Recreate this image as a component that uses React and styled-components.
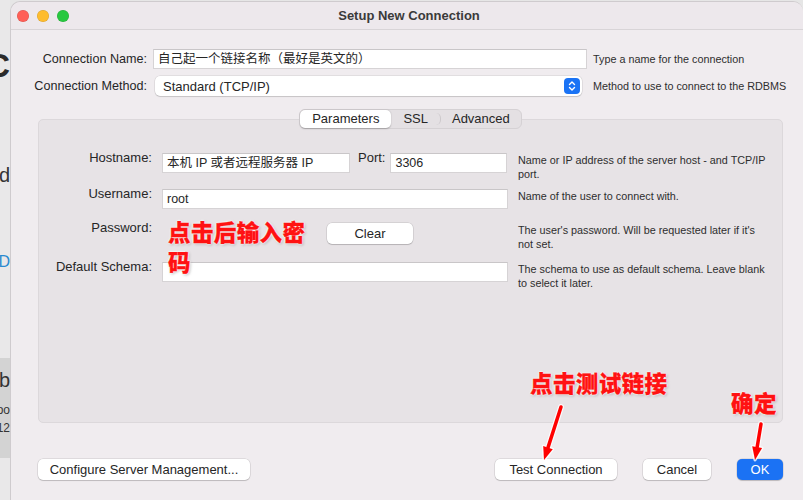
import React from "react";
import styled, { createGlobalStyle } from "styled-components";

const GlobalStyle = createGlobalStyle`
    html, body {
        margin: 0;
        padding: 0;
        background: #e6e6e6;
        font-family: "Liberation Sans", "Noto Sans CJK SC", sans-serif;
        color: #262626;
    }
`;

const Page = styled.div`
    display: flex;
    width: 803px;
    height: 500px;
    overflow: hidden;
`;

// --- fundo (app borrado atrás da janela) ---

const Backdrop = styled.div`
    width: 10px;
    flex-shrink: 0;
    display: flex;
    flex-direction: column;
    overflow: hidden;
    background: #e9e8e9;
`;

const BackBlock = styled.div`
    height: ${p => p.$h}px;
    background: ${p => p.$bg || "transparent"};
    display: flex;
    flex-direction: column;
    align-items: flex-end;
    justify-content: ${p => p.$justify || "center"};
    color: ${p => p.$color || "#333"};
    font-size: ${p => p.$size || 20}px;
    font-weight: ${p => p.$weight || 400};
    line-height: 1;
    white-space: nowrap;
`;

// --- janela ---

const Window = styled.div`
    position: relative;
    width: 793px;
    height: 499px;
    margin-top: 1px;
    background: #f0ecef;
    border: 1px solid #cfcbce;
    border-bottom: none;
    border-right: none;
    border-radius: 10px 10px 0 0;
    box-sizing: border-box;
    display: flex;
    flex-direction: column;
`;

const TitleBar = styled.div`
    height: 27px;
    flex-shrink: 0;
    display: flex;
    align-items: center;
    padding-left: 6px;
    border-bottom: 1px solid #d8d4d7;
    background: #ede8ec;
    border-radius: 10px 10px 0 0;
`;

const Light = styled.span`
    width: 12px;
    height: 12px;
    border-radius: 50%;
    margin-right: 8px;
    background: ${p => p.$color};
    box-shadow: inset 0 0 0 0.5px rgba(0,0,0,0.15);
`;

const Title = styled.div`
    flex: 1;
    text-align: center;
    font-weight: bold;
    font-size: 13px;
    color: #3a3a3a;
    margin-left: -62px;
`;

const TopForm = styled.div`
    display: grid;
    grid-template-columns: 136px 434px 1fr;
    column-gap: 6px;
    row-gap: 7px;
    padding-top: 19px;
    align-items: center;
`;

const TopLabel = styled.label`
    text-align: right;
    font-size: 12.6px;
`;

const TextInput = styled.div`
    height: 20px;
    box-sizing: border-box;
    background: #fff;
    border: 1px solid #d6d3d5;
    border-top-color: #c9c6c8;
    font-size: 12.5px;
    line-height: 18px;
    padding: 0 4px;
    white-space: nowrap;
    overflow: hidden;
    width: ${p => (p.$w ? `${p.$w}px` : "auto")};
`;

const Select = styled.div`
    margin-left: 2px;
    width: 427px;
    height: 20px;
    box-sizing: border-box;
    background: #fff;
    border-radius: 5px;
    box-shadow: 0 0 0 0.5px rgba(0,0,0,0.12), 0 1px 1px rgba(0,0,0,0.12);
    display: flex;
    align-items: center;
    justify-content: space-between;
    padding: 0 2px 0 8px;
    font-size: 13px;
`;

const Stepper = styled.span`
    width: 16px;
    height: 16px;
    border-radius: 4px;
    background: #1a73f5;
    display: flex;
    align-items: center;
    justify-content: center;
`;

const Hint = styled.div`
    font-size: 10.8px;
    line-height: 14px;
    color: #2e2e2e;
`;

// --- painel com abas ---

const TabArea = styled.div`
    margin: 13px 20px 0 27px;
    display: flex;
    flex-direction: column;
    align-items: center;
`;

const Segmented = styled.div`
    position: relative;
    z-index: 1;
    display: flex;
    align-items: center;
    height: 20px;
    box-sizing: border-box;
    border-radius: 6px;
    background: #e4e0e3;
    border: 1px solid #d5d1d4;
    font-size: 13px;
`;

const Tab = styled.div`
    padding: 0 ${p => p.$pad}px;
    border-radius: 5px;
    background: ${p => (p.$active ? "#fff" : "transparent")};
    box-shadow: ${p => (p.$active ? "0 0.5px 1.5px rgba(0,0,0,0.25)" : "none")};
    border-right: ${p => (p.$sep ? "1px solid #cdc9cc" : "none")};
    height: ${p => (p.$sep ? "12px" : "18px")};
    line-height: ${p => (p.$sep ? "12px" : "18px")};
`;

const Panel = styled.div`
    align-self: stretch;
    margin-top: -10px;
    height: 304px;
    box-sizing: border-box;
    background: #e7e3e6;
    border: 1px solid #dcd8db;
    border-radius: 5px;
    padding-top: 33px;
`;

const ParamGrid = styled.div`
    display: grid;
    grid-template-columns: 113px 346px 1fr;
    grid-template-rows: 36px 34px 39px auto;
    column-gap: 10px;
`;

const ParamLabel = styled.label`
    text-align: right;
    font-size: 13px;
    line-height: 14px;
    margin-top: -2px;
`;

const Controls = styled.div`
    display: flex;
    align-items: flex-start;
    padding-left: ${p => p.$pl || 0}px;
`;

const InlineLabel = styled.span`
    font-size: 13px;
    line-height: 14px;
    margin: -2px 5px 0 8px;
`;

const PlainButton = styled.div`
    height: 21px;
    width: ${p => p.$w}px;
    box-sizing: border-box;
    background: ${p => (p.$primary ? "#1b72f4" : "#fff")};
    color: ${p => (p.$primary ? "#fff" : "#262626")};
    border-radius: 5px;
    box-shadow: 0 0 0 0.5px rgba(0,0,0,0.15), 0 1px 1px rgba(0,0,0,0.15);
    font-size: 13px;
    display: flex;
    align-items: center;
    justify-content: center;
`;

const ButtonRow = styled.div`
    margin: 36px 20px 0 27px;
    display: flex;
    align-items: center;
`;

const RightButtons = styled.div`
    margin-left: auto;
    display: flex;
    gap: 26px;
`;

// --- anotações em vermelho ---

const Note = styled.div`
    position: absolute;
    left: ${p => p.$x}px;
    top: ${p => p.$y}px;
    width: ${p => p.$w}px;
    font-family: "Noto Sans CJK SC", sans-serif;
    font-weight: 900;
    font-size: 22.5px;
    line-height: 30px;
    color: #ff1212;
    letter-spacing: 0.4px;
    -webkit-text-stroke: 0.3px #ff1212;
    text-shadow: 0 0 2px #fff, 0 0 2px #fff, 0 0 3px #fff, 1px 1px 3px rgba(0,0,0,0.35);
`;

const Arrows = styled.svg`
    position: absolute;
    left: 0;
    top: 0;
    pointer-events: none;
`;

function Arrow({ x1, y1, x2, y2 }) {
    const ang = Math.atan2(y2 - y1, x2 - x1);
    const len = 13;
    const wid = 5;
    const bx = x2 - Math.cos(ang) * len;
    const by = y2 - Math.sin(ang) * len;
    const px = -Math.sin(ang) * wid;
    const py = Math.cos(ang) * wid;
    const head = `${x2},${y2} ${bx + px},${by + py} ${bx - px},${by - py}`;
    return (
        <g>
            <line x1={x1} y1={y1} x2={bx} y2={by} stroke="#fff" strokeWidth="6" strokeLinecap="round" opacity="0.8" />
            <polygon points={head} fill="#fff" stroke="#fff" strokeWidth="3" strokeLinejoin="round" opacity="0.8" />
            <line x1={x1} y1={y1} x2={bx} y2={by} stroke="#f00" strokeWidth="3.5" strokeLinecap="round" />
            <polygon points={head} fill="#f00" />
        </g>
    );
}

export default function App() {
    return (
        <Page>
            <GlobalStyle />
            <Backdrop>
                <BackBlock $h={50} />
                <BackBlock $h={30} $size={34} $weight={700} $color="#2b2b2b">C</BackBlock>
                <BackBlock $h={105} $justify="flex-end" $size={20}>d</BackBlock>
                <BackBlock $h={85} $justify="flex-end" $size={16} $color="#2a8ad0">D</BackBlock>
                <BackBlock $h={88} />
                <BackBlock $h={100} $bg="#d3d3d3" $justify="flex-start">
                    <span style={{ fontSize: 20, marginTop: 12 }}>b</span>
                    <span style={{ fontSize: 12, marginTop: 14 }}>oo</span>
                    <span style={{ fontSize: 12, marginTop: 6 }}>12</span>
                </BackBlock>
            </Backdrop>

            <Window>
                <TitleBar>
                    <Light $color="#ff5f57" />
                    <Light $color="#febc2e" />
                    <Light $color="#28c840" />
                    <Title>Setup New Connection</Title>
                </TitleBar>

                <TopForm>
                    <TopLabel>Connection Name:</TopLabel>
                    <TextInput>自己起一个链接名称（最好是英文的）</TextInput>
                    <Hint>Type a name for the connection</Hint>

                    <TopLabel>Connection Method:</TopLabel>
                    <Select>
                        <span>Standard (TCP/IP)</span>
                        <Stepper>
                            <svg width="10" height="12" viewBox="0 0 10 12">
                                <path d="M2.5 4.5 L5 2 L7.5 4.5 M2.5 7.5 L5 10 L7.5 7.5" stroke="#fff" strokeWidth="1.4" fill="none" strokeLinecap="round" strokeLinejoin="round" />
                            </svg>
                        </Stepper>
                    </Select>
                    <Hint>Method to use to connect to the RDBMS</Hint>
                </TopForm>

                <TabArea>
                    <Segmented>
                        <Tab $active $pad={12}>Parameters</Tab>
                        <Tab $pad={12} $sep>SSL</Tab>
                        <Tab $pad={11}>Advanced</Tab>
                    </Segmented>
                    <Panel>
                        <ParamGrid>
                            <ParamLabel>Hostname:</ParamLabel>
                            <Controls>
                                <TextInput $w={188}>本机 IP 或者远程服务器 IP</TextInput>
                                <InlineLabel>Port:</InlineLabel>
                                <TextInput $w={117}>3306</TextInput>
                            </Controls>
                            <Hint>Name or IP address of the server host - and TCP/IP<br />port.</Hint>

                            <ParamLabel>Username:</ParamLabel>
                            <Controls>
                                <TextInput $w={346}>root</TextInput>
                            </Controls>
                            <Hint>Name of the user to connect with.</Hint>

                            <ParamLabel>Password:</ParamLabel>
                            <Controls $pl={165}>
                                <PlainButton $w={86}>Clear</PlainButton>
                            </Controls>
                            <Hint>The user's password. Will be requested later if it's<br />not set.</Hint>

                            <ParamLabel>Default Schema:</ParamLabel>
                            <Controls>
                                <TextInput $w={346}></TextInput>
                            </Controls>
                            <Hint>The schema to use as default schema. Leave blank<br />to select it later.</Hint>
                        </ParamGrid>
                    </Panel>
                </TabArea>

                <ButtonRow>
                    <PlainButton $w={212}>Configure Server Management...</PlainButton>
                    <RightButtons>
                        <PlainButton $w={122}>Test Connection</PlainButton>
                        <PlainButton $w={68}>Cancel</PlainButton>
                        <PlainButton $w={46} $primary>OK</PlainButton>
                    </RightButtons>
                </ButtonRow>

                <Note $x={157} $y={214} $w={146}>点击后输入密码</Note>
                <Note $x={519} $y={365} $w={150}>点击测试链接</Note>
                <Note $x={720} $y={385} $w={60}>确定</Note>

                <Arrows width="793" height="499">
                    <Arrow x1={550} y1={405} x2={533} y2={458} />
                    <Arrow x1={750} y1={422} x2={744} y2={458} />
                </Arrows>
            </Window>
        </Page>
    );
}
